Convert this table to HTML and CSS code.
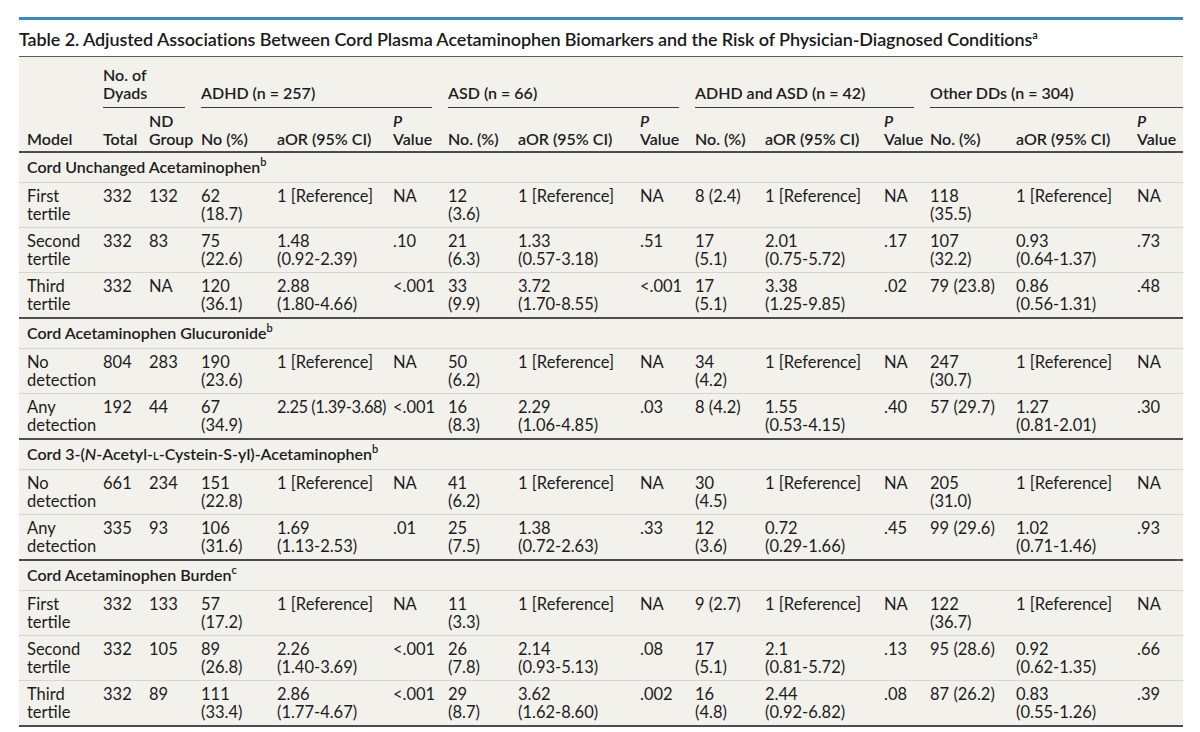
FILE: index.html
```html
<!DOCTYPE html>
<html lang="en">
<head>
<meta charset="utf-8">
<title>Table 2</title>
<link rel="stylesheet" href="styles.css">
</head>
<body>
<div class="figure">
  <div class="topbar"></div>
  <h1 class="title">Table 2. Adjusted Associations Between Cord Plasma Acetaminophen Biomarkers and the Risk of Physician-Diagnosed Conditions<sup>a</sup></h1>
  <table class="data">
    <colgroup>
      <col class="c-model"><col class="c-total"><col class="c-nd">
      <col class="c-no1"><col class="c-aor1"><col class="c-p1">
      <col class="c-no2"><col class="c-aor2"><col class="c-p2">
      <col class="c-no3"><col class="c-aor3"><col class="c-p3">
      <col class="c-no4"><col class="c-aor4"><col class="c-p4">
    </colgroup>
    <thead>
      <tr class="grp">
        <th></th>
        <th colspan="2"><div class="ul">No. of<br>Dyads</div></th>
        <th colspan="3"><div class="ul">ADHD (n = 257)</div></th>
        <th colspan="3"><div class="ul">ASD (n = 66)</div></th>
        <th colspan="3"><div class="ul">ADHD and ASD (n = 42)</div></th>
        <th colspan="3" class="last"><div class="ul">Other DDs (n = 304)</div></th>
      </tr>
      <tr class="sub">
        <th class="first">Model</th>
        <th>Total</th>
        <th>ND<br>Group</th>
        <th>No (%)</th>
        <th>aOR (95% CI)</th>
        <th><i>P</i><br>Value</th>
        <th>No. (%)</th>
        <th>aOR (95% CI)</th>
        <th><i>P</i><br>Value</th>
        <th>No. (%)</th>
        <th>aOR (95% CI)</th>
        <th><i>P</i><br>Value</th>
        <th>No. (%)</th>
        <th>aOR (95% CI)</th>
        <th><i>P</i><br>Value</th>
      </tr>
    </thead>
    <tbody>
      <tr class="section"><td colspan="15">Cord Unchanged Acetaminophen<sup>b</sup></td></tr>
      <tr><td>First<br>tertile</td><td>332</td><td>132</td><td>62<br>(18.7)</td><td>1 [Reference]</td><td>NA</td><td>12<br>(3.6)</td><td>1 [Reference]</td><td>NA</td><td>8 (2.4)</td><td>1 [Reference]</td><td>NA</td><td>118<br>(35.5)</td><td>1 [Reference]</td><td>NA</td></tr>
      <tr><td>Second<br>tertile</td><td>332</td><td>83</td><td>75<br>(22.6)</td><td>1.48<br>(0.92-2.39)</td><td>.10</td><td>21<br>(6.3)</td><td>1.33<br>(0.57-3.18)</td><td>.51</td><td>17<br>(5.1)</td><td>2.01<br>(0.75-5.72)</td><td>.17</td><td>107<br>(32.2)</td><td>0.93<br>(0.64-1.37)</td><td>.73</td></tr>
      <tr class="end"><td>Third<br>tertile</td><td>332</td><td>NA</td><td>120<br>(36.1)</td><td>2.88<br>(1.80-4.66)</td><td>&lt;.001</td><td>33<br>(9.9)</td><td>3.72<br>(1.70-8.55)</td><td>&lt;.001</td><td>17<br>(5.1)</td><td>3.38<br>(1.25-9.85)</td><td>.02</td><td>79 (23.8)</td><td>0.86<br>(0.56-1.31)</td><td>.48</td></tr>

      <tr class="section"><td colspan="15">Cord Acetaminophen Glucuronide<sup>b</sup></td></tr>
      <tr><td>No<br>detection</td><td>804</td><td>283</td><td>190<br>(23.6)</td><td>1 [Reference]</td><td>NA</td><td>50<br>(6.2)</td><td>1 [Reference]</td><td>NA</td><td>34<br>(4.2)</td><td>1 [Reference]</td><td>NA</td><td>247<br>(30.7)</td><td>1 [Reference]</td><td>NA</td></tr>
      <tr class="end"><td>Any<br>detection</td><td>192</td><td>44</td><td>67<br>(34.9)</td><td class="tight">2.25 (1.39-3.68)</td><td>&lt;.001</td><td>16<br>(8.3)</td><td>2.29<br>(1.06-4.85)</td><td>.03</td><td>8 (4.2)</td><td>1.55<br>(0.53-4.15)</td><td>.40</td><td>57 (29.7)</td><td>1.27<br>(0.81-2.01)</td><td>.30</td></tr>

      <tr class="section"><td colspan="15">Cord 3-(<i>N</i>-Acetyl-<span class="sc">l</span>-Cystein-S-yl)-Acetaminophen<sup>b</sup></td></tr>
      <tr><td>No<br>detection</td><td>661</td><td>234</td><td>151<br>(22.8)</td><td>1 [Reference]</td><td>NA</td><td>41<br>(6.2)</td><td>1 [Reference]</td><td>NA</td><td>30<br>(4.5)</td><td>1 [Reference]</td><td>NA</td><td>205<br>(31.0)</td><td>1 [Reference]</td><td>NA</td></tr>
      <tr class="end"><td>Any<br>detection</td><td>335</td><td>93</td><td>106<br>(31.6)</td><td>1.69<br>(1.13-2.53)</td><td>.01</td><td>25<br>(7.5)</td><td>1.38<br>(0.72-2.63)</td><td>.33</td><td>12<br>(3.6)</td><td>0.72<br>(0.29-1.66)</td><td>.45</td><td>99 (29.6)</td><td>1.02<br>(0.71-1.46)</td><td>.93</td></tr>

      <tr class="section"><td colspan="15">Cord Acetaminophen Burden<sup>c</sup></td></tr>
      <tr><td>First<br>tertile</td><td>332</td><td>133</td><td>57<br>(17.2)</td><td>1 [Reference]</td><td>NA</td><td>11<br>(3.3)</td><td>1 [Reference]</td><td>NA</td><td>9 (2.7)</td><td>1 [Reference]</td><td>NA</td><td>122<br>(36.7)</td><td>1 [Reference]</td><td>NA</td></tr>
      <tr><td>Second<br>tertile</td><td>332</td><td>105</td><td>89<br>(26.8)</td><td>2.26<br>(1.40-3.69)</td><td>&lt;.001</td><td>26<br>(7.8)</td><td>2.14<br>(0.93-5.13)</td><td>.08</td><td>17<br>(5.1)</td><td>2.1<br>(0.81-5.72)</td><td>.13</td><td>95 (28.6)</td><td>0.92<br>(0.62-1.35)</td><td>.66</td></tr>
      <tr class="end"><td>Third<br>tertile</td><td>332</td><td>89</td><td>111<br>(33.4)</td><td>2.86<br>(1.77-4.67)</td><td>&lt;.001</td><td>29<br>(8.7)</td><td>3.62<br>(1.62-8.60)</td><td>.002</td><td>16<br>(4.8)</td><td>2.44<br>(0.92-6.82)</td><td>.08</td><td>87 (26.2)</td><td>0.83<br>(0.55-1.26)</td><td>.39</td></tr>
    </tbody>
  </table>
</div>
</body>
</html>
```

FILE: styles.css
```css
html, body {
  margin: 0;
  padding: 0;
  background: #ffffff;
}

body {
  font-family: Lato, "Noto Sans", "DejaVu Sans", sans-serif;
  color: #1c1c1c;
}

.figure {
  width: 1164px;
  margin-left: 19px;
  padding-top: 17px;
}

.topbar {
  height: 3px;
  background: #3a8bba;
}

.title {
  margin: 0;
  padding: 8px 0 6px 0;
  font-size: 18px;
  letter-spacing: -0.1px;
  line-height: 22px;
  font-weight: 600;
  color: #1a1a1a;
  border-bottom: 1px solid #5a5a5a;
  white-space: nowrap;
}

.title sup {
  font-size: 11px;
  line-height: 0;
  vertical-align: 7px;
}

.data {
  width: 1164px;
  table-layout: fixed;
  border-collapse: collapse;
  background: #f2f1ec;
  font-size: 16px;
  line-height: 18px;
}

.c-model { width: 80px; }
.c-total { width: 46px; }
.c-nd { width: 52px; }
.c-no1 { width: 76px; }
.c-aor1 { width: 116px; }
.c-p1 { width: 55px; }
.c-no2 { width: 70px; }
.c-aor2 { width: 122px; }
.c-p2 { width: 55px; }
.c-no3 { width: 70px; }
.c-aor3 { width: 119px; }
.c-p3 { width: 46px; }
.c-no4 { width: 86px; }
.c-aor4 { width: 121px; }
.c-p4 { width: 50px; }

.data th {
  font-weight: 600;
  text-align: left;
  vertical-align: bottom;
  white-space: nowrap;
}

.grp th {
  padding: 9px 12px 0 4px;
}

.grp th.last {
  padding-right: 0;
}

.ul {
  padding-bottom: 5px;
  border-bottom: 1px solid #3c3c3c;
}

.sub th {
  padding: 4px 4px 3px 4px;
  border-bottom: 2px solid #4d4d4d;
}

.sub th.first {
  padding-left: 8px;
}

.data td {
  padding: 4px 4px 4px 4px;
  font-size: 16.5px;
  vertical-align: top;
  white-space: nowrap;
  border-bottom: 1px solid #d7d5cf;
}

.data td:first-child {
  padding-left: 8px;
}

.data td.tight {
  letter-spacing: -0.5px;
}

.data tr.end td {
  border-bottom: 2px solid #4d4d4d;
}

.data tr.section td {
  font-size: 16px;
  font-weight: 600;
  padding: 5px 8px 6px 8px;
}

.data sup {
  font-size: 11px;
  line-height: 0;
  vertical-align: 7px;
}

.sc {
  font-variant: small-caps;
}
```
